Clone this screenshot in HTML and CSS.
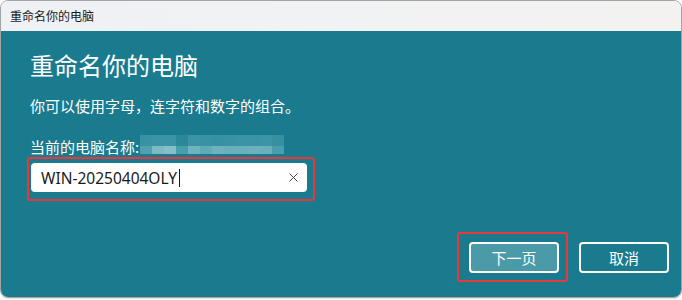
FILE: index.html
```html
<!DOCTYPE html>
<html lang="zh-CN">
<head>
<meta charset="utf-8">
<title>重命名你的电脑</title>
<link rel="stylesheet" href="styles.css">
</head>
<body>
<div class="window">
  <div class="titlebar">重命名你的电脑</div>
  <div class="content">
    <h1 class="title">重命名你的电脑</h1>
    <p class="desc">你可以使用字母，连字符和数字的组合。</p>
    <div class="label-row">
      <span class="label">当前的电脑名称:</span>
      <span class="mosaic"><span class="mosaic-top"></span><span class="mosaic-bottom"></span></span>
    </div>
    <div class="highlight input-highlight">
      <div class="textbox">
        <span class="value">WIN-20250404OLY</span><span class="caret"></span>
        <svg class="clear" width="9" height="9" viewBox="0 0 9 9"><path d="M0.5 0.5 L8.5 8.5 M8.5 0.5 L0.5 8.5" stroke="#444444" stroke-width="1" fill="none"/></svg>
      </div>
    </div>
    <div class="footer">
      <div class="highlight btn-highlight">
        <button class="btn btn-primary">下一页</button>
      </div>
      <button class="btn btn-secondary">取消</button>
    </div>
  </div>
</div>
</body>
</html>
```

FILE: styles.css
```css
html, body {
  margin: 0;
  padding: 0;
  background: #ffffff;
}
body {
  font-family: "Noto Sans", "Noto Sans CJK SC", sans-serif;
  width: 682px;
  height: 300px;
  overflow: hidden;
}
.window {
  box-sizing: border-box;
  width: 682px;
  height: 298px;
  border: 1px solid #a4a4a4;
  border-radius: 8px;
  overflow: hidden;
  display: flex;
  flex-direction: column;
  box-shadow: 0 1px 2px rgba(0,0,0,0.12);
}
.titlebar {
  height: 30px;
  line-height: 30px;
  padding-left: 9px;
  font-size: 12px;
  color: #1a1a1a;
  font-family: "Noto Sans CJK SC", sans-serif;
  background: linear-gradient(90deg, #eef1f5 0%, #f1f2f3 50%, #f3f2f1 100%);
  flex: none;
}
.content {
  flex: 1;
  background: #1a7b8f;
  color: #ffffff;
  padding: 18px 12px 15px 29px;
  display: flex;
  flex-direction: column;
  font-family: "Noto Sans CJK SC", sans-serif;
}
.title {
  margin: 0;
  font-size: 24px;
  line-height: 32px;
  font-weight: 400;
}
.desc {
  margin: 15px 0 0;
  font-size: 15px;
  line-height: 20px;
}
.label-row {
  margin-top: 19px;
  display: flex;
  align-items: flex-end;
  height: 22px;
}
.label {
  font-size: 15px;
  line-height: 20px;
  width: 110px;
  white-space: nowrap;
}
.mosaic {
  display: flex;
  flex-direction: column;
  width: 144px;
  height: 19px;
  margin-bottom: 3px;
}
.mosaic-top {
  height: 11px;
  background: linear-gradient(90deg,
    #3892a2 0 12px, #3a94a4 12px 36px, #2a8898 36px 48px, #3a94a4 48px 60px,
    #3892a2 60px 72px, #3691a1 72px 84px, #3892a3 84px 96px, #3a94a4 96px 120px,
    #3c95a5 120px 132px, #3591a1 132px 144px);
}
.mosaic-bottom {
  height: 8px;
  background: linear-gradient(90deg,
    #4fa1b0 0 12px, #7cbac5 12px 24px, #86bfc9 24px 36px, #4a9dac 36px 48px,
    #6fb3bf 48px 60px, #5eaab8 60px 72px, #6db2be 72px 84px, #6aafbc 84px 108px,
    #6eb1bd 108px 120px, #6aafbc 120px 132px, #4a9dac 132px 144px);
}
.highlight {
  border: 2px solid #e8383d;
  border-radius: 3px;
  box-sizing: border-box;
}
.input-highlight {
  margin-left: -3px;
  width: 288px;
  padding: 4px 6px 7px 2px;
}
.textbox {
  height: 29px;
  background: #ffffff;
  border-radius: 4px;
  display: flex;
  align-items: center;
  padding: 0 9px 0 10px;
  color: #1a1a1a;
  font-family: "Noto Sans", sans-serif;
}
.value {
  font-size: 15.5px;
}
.caret {
  width: 1px;
  height: 18px;
  background: #1a1a1a;
  margin-left: 2px;
}
.clear {
  margin-left: auto;
}
.footer {
  margin-top: auto;
  display: flex;
  justify-content: flex-end;
  align-items: center;
  gap: 11px;
}
.btn-highlight {
  width: 111px;
  height: 50px;
  padding: 8px 7px 7px 10px;
}
.btn {
  box-sizing: border-box;
  width: 90px;
  height: 31px;
  border: 2px solid #ffffff;
  border-radius: 4px;
  color: #ffffff;
  font-family: "Noto Sans CJK SC", sans-serif;
  font-size: 15px;
  line-height: 27px;
  padding: 0;
  display: block;
}
.btn-primary {
  background: #4a9aa8;
}
.btn-secondary {
  background: transparent;
}
```
